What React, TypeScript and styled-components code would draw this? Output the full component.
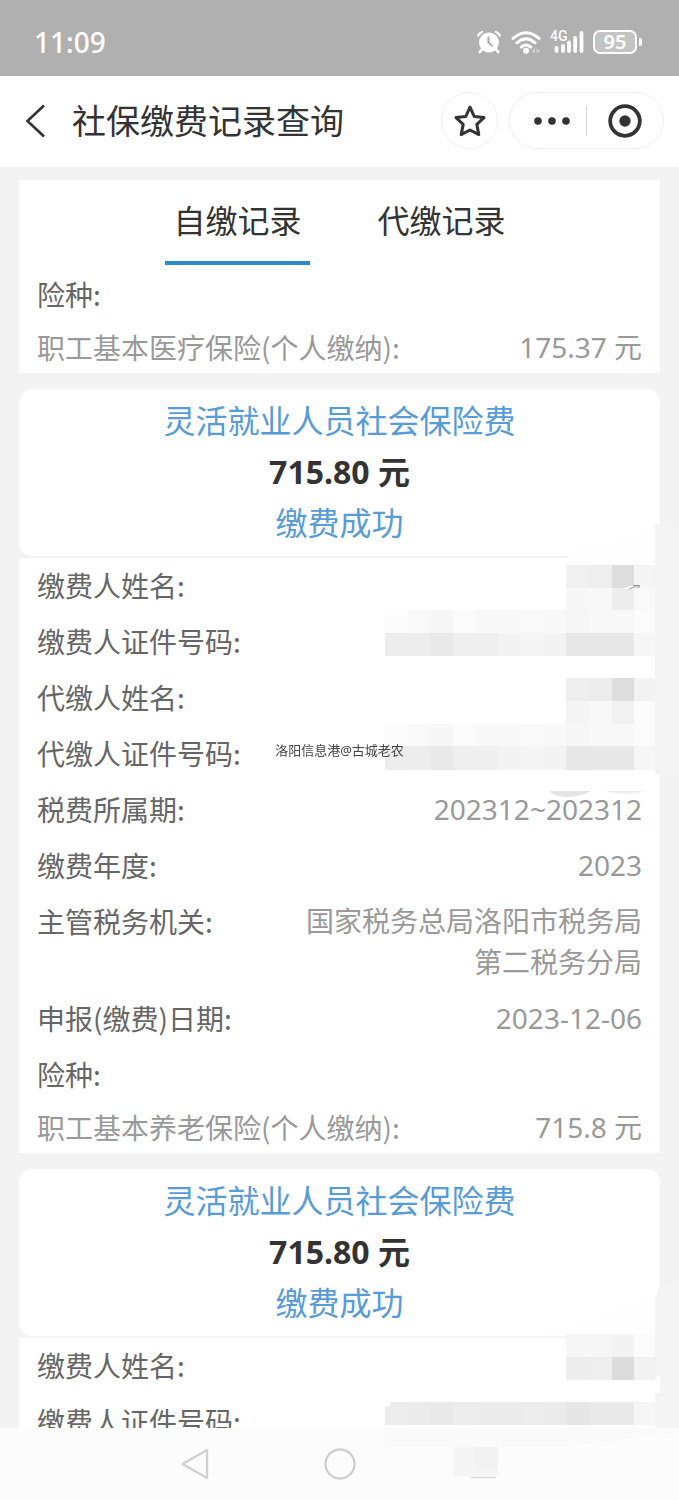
import React from "react";
import styled, { createGlobalStyle } from "styled-components";

const GlobalStyle = createGlobalStyle`
  * { box-sizing: border-box; }
  body {
    margin: 0;
    background: #f3f3f3;
    font-family: "Noto Sans", "Noto Sans CJK SC", sans-serif;
    color: #333;
  }
  button {
    border: 0;
    padding: 0;
    background: none;
    color: inherit;
    font: inherit;
    cursor: pointer;
  }
  svg { display: block; }
`;

const Screen = styled.div`
  display: flex;
  flex-direction: column;
  height: 100vh;
  overflow: hidden;
`;

const StatusBar = styled.div`
  display: flex;
  flex: none;
  align-items: center;
  justify-content: space-between;
  height: 76px;
  padding: 8px 37px 0 34px;
  background: #b0b0b0;
  color: #fff;
`;

const Clock = styled.time`
  font-size: 28px;
  font-weight: 500;
  line-height: 40px;
`;

const StatusIcons = styled.div`
  display: flex;
  align-items: center;
  gap: 9px;
`;

const Signal = styled.div`
  position: relative;
`;

const Network = styled.span`
  position: absolute;
  top: -1px;
  left: 0;
  font-family: Roboto, sans-serif;
  font-size: 14px;
  font-weight: 500;
  line-height: 14px;
`;

const Battery = styled.div`
  display: flex;
  align-items: center;
  gap: 2px;
`;

const BatteryLevel = styled.span`
  width: 44px;
  height: 24px;
  border: 2px solid #fff;
  border-radius: 7px;
  background: #c4c4c4;
  font-size: 20px;
  font-weight: 600;
  line-height: 20px;
  text-align: center;
`;

const BatteryTip = styled.span`
  width: 3px;
  height: 8px;
  border-radius: 0 2px 2px 0;
  background: #fff;
`;

const Header = styled.header`
  display: flex;
  flex: none;
  align-items: center;
  height: 91px;
  padding: 0 15px 2px 24px;
  background: #fff;
`;

const Title = styled.h1`
  flex: 1;
  margin: 0 0 0 26px;
  font-size: 34px;
  font-weight: 400;
  line-height: 48px;
`;

const RoundButton = styled.button`
  display: grid;
  place-items: center;
  width: 57px;
  height: 57px;
  margin-right: 11px;
  border: 1px solid #f0f0f0;
  border-radius: 50%;
`;

const Capsule = styled.div`
  display: flex;
  align-items: center;
  height: 57px;
  border: 1px solid #f0f0f0;
  border-radius: 29px;
`;

const CapsuleButton = styled.button<{ $indent?: number }>`
  display: grid;
  place-items: center;
  width: 76px;
  height: 55px;
  padding-left: ${(p) => p.$indent ?? 0}px;
`;

const CapsuleDivider = styled.span`
  width: 1px;
  height: 30px;
  background: #d8d8d8;
`;

const Content = styled.main`
  flex: 1;
  min-height: 0;
  padding: 13px 19px 0;
  overflow: hidden;
`;

const Panel = styled.section`
  position: relative;
  margin-bottom: 16px;
`;

const Tabs = styled.div`
  display: flex;
  justify-content: center;
  gap: 60px;
  padding-bottom: 2px;
  background: #fff;
`;

const Tab = styled.button<{ $active?: boolean }>`
  height: 85px;
  padding: 0 8px;
  border-bottom: 4px solid ${(p) => (p.$active ? "#2e8bcb" : "transparent")};
  font-size: 32px;
  line-height: 80px;
`;

const Summary = styled.div`
  margin-bottom: 2px;
  padding: 6px 0 8px;
  border-radius: 14px;
  background: #fff;
  text-align: center;
  font-size: 32px;
  line-height: 51px;
`;

const SummaryLink = styled.a`
  display: block;
  color: #579bd7;
  text-decoration: none;
`;

const Amount = styled.strong`
  display: block;
  font-weight: 700;
`;

const SummaryStatus = styled.span`
  display: block;
  color: #579bd7;
`;

const Details = styled.dl`
  display: flex;
  flex-direction: column;
  gap: 15px;
  margin: 0;
  padding: 7px 18px 5px;
  background: #fff;
  font-size: 28px;
  line-height: 41px;
`;

const Row = styled.div<{ $muted?: boolean }>`
  display: flex;
  justify-content: space-between;
  min-height: 41px;
  margin-top: ${(p) => (p.$muted ? -3 : 0)}px;
  color: ${(p) => (p.$muted ? "#999" : "#666")};
`;

const Label = styled.dt`
  flex: none;
  font-family: "Noto Sans CJK SC", sans-serif;
`;

const Value = styled.dd`
  max-width: 344px;
  margin: 0;
  color: #999;
  text-align: right;
`;

const Redaction = styled.div<{ $top: number }>`
  position: absolute;
  top: ${(p) => p.$top}px;
  right: -19px;
`;

const Watermark = styled.span`
  position: fixed;
  top: 50%;
  left: 50%;
  transform: translate(-50%, -50%);
  color: #444;
  font-size: 13px;
  line-height: 20px;
  white-space: nowrap;
`;

const NavBar = styled.nav`
  position: relative;
  display: flex;
  flex: none;
  align-items: center;
  justify-content: center;
  gap: 113px;
  height: 72px;
  background: #fcfcfc;
`;

const NavButton = styled.button`
  display: grid;
  place-items: center;
  width: 32px;
  height: 40px;
`;

const NavRedaction = styled.div`
  position: absolute;
  top: 0;
  right: 0;
  pointer-events: none;
`;

const CELL = 68 / 3;

/* Each row lists grey levels for the cells, starting at the given column. */
type MosaicRow = { row: number; col: number; shades: string[] };

const Mosaic = ({ rows, top }: { rows: MosaicRow[]; top: number }) => (
  <g shapeRendering="crispEdges">
    {rows.flatMap(({ row, col, shades }) =>
      shades.map((shade, i) => (
        <rect
          key={`${row}-${i}`}
          x={(col + i) * CELL}
          y={top + row * CELL}
          width={col + i === 11 ? 21 : CELL + 0.5}
          height={CELL + 0.5}
          fill={`#${shade.repeat(3)}`}
        />
      ))
    )}
  </g>
);

const light = ["fc", "f9", "f7", "fb", "f8", "f8", "f9", "f8", "f6", "f8", "f8", "fb"];
const dark = ["ec", "ed", "e9", "ef", "ef", "f3", "f5", "f3", "e7", "e8", "e8", "f6"];

const firstMosaic: MosaicRow[] = [
  { row: 0, col: 8, shades: ["f0", "ee", "dd", "f5"] },
  { row: 1, col: 8, shades: ["f7", "f8", "ed", "f9"] },
  { row: 2, col: 0, shades: light },
  { row: 3, col: 0, shades: dark },
  { row: 5, col: 8, shades: ["ef", "ed", "dd", "f3"] },
  { row: 6, col: 8, shades: ["f5", "f8", "f2", "fb"] },
  { row: 7, col: 0, shades: light },
  { row: 8, col: 0, shades: dark },
];

const secondMosaic: MosaicRow[] = [
  { row: 0, col: 8, shades: ["f6", "f6", "f3", "fb"] },
  { row: 1, col: 8, shades: ["ed", "ee", "dc", "f2"] },
  { row: 3, col: 0, shades: ["ed", "eb", "e9", "ed", "eb", "eb", "ec", "eb", "e6", "e9", "e9", "f6"] },
];

const FullRedaction = () => (
  <Redaction $top={135} aria-hidden="true">
    <svg width="294" height="278">
      <path d="M178 37L204 20L245 8L270 0V41H181Z" fill="#fefefe" />
      <path d="M270 0H290V251H270Z" fill="#f4f4f4" />
      <Mosaic rows={firstMosaic} top={41} />
      <path d="M238 65q9-5 20-4q-4 4-20 4Z" fill="#fff" />
      <path d="M244 65l5-2h6M248 61.500h7" fill="none" stroke="#999" />
      <path d="M164 267H206Q195 273 180 273Q168 272 164 267Z" fill="#e5e5e5" />
      <path d="M220 267H261Q240 273 220 267Z" fill="#efefef" />
    </svg>
  </Redaction>
);

const PartialRedaction = () => (
  <Redaction $top={116} aria-hidden="true">
    <svg width="294" height="143">
      <path d="M155 48L220 25L271 5V49H155V54Z" fill="#fefefe" />
      <path d="M270 14L274 3L294 0V143H270Z" fill="#f4f4f4" />
      <Mosaic rows={secondMosaic} top={49} />
      <path d="M270 94L275 89V108H270Z" fill="#fff" />
      <path d="M0 117H5V121L0 122Z" fill="#fff" />
    </svg>
  </Redaction>
);

const AlarmIcon = () => (
  <svg width="26" height="24" viewBox="0 0 26 24" fill="none" stroke="#fff" strokeLinecap="round">
    <circle cx="13" cy="12.5" r="10" fill="#fff" stroke="none" />
    <path d="M2.2 5.5Q3.3 3.2 6 2M23.8 5.5Q22.7 3.2 20 2" strokeWidth="2.4" />
    <path d="M6 19.5L3.7 22M20 19.5L22.3 22" strokeWidth="2.6" />
    <path d="M12.5 7.500V12.500L16 15.500" stroke="#b0b0b0" strokeWidth="2.2" />
  </svg>
);

const WifiIcon = () => (
  <svg width="30" height="24" viewBox="0 0 30 24" fill="none" stroke="#fff" strokeWidth="3" strokeLinecap="round">
    <path d="M2 8.4Q15-3 28 8.4M6 12.8Q15 5 24 12.8M10.3 17Q15 13 19.7 17" />
    <circle cx="15" cy="20.7" r="3" fill="#fff" stroke="none" />
    <path d="M24 18.5v5L20.5 21ZM25.5 18.5v5L29.5 21Z" fill="#d0d0d0" stroke="none" />
  </svg>
);

const SignalIcon = () => (
  <svg width="34" height="24" viewBox="0 0 34 24" stroke="#fff" strokeWidth="3.8" strokeLinecap="round">
    <path d="M6.5 18v3M13 16v5M19 12.5V21M25.2 8V21M31.5 3V21" />
  </svg>
);

const payerRows = ["缴费人姓名:", "缴费人证件号码:"];
const agentRows = ["代缴人姓名:", "代缴人证件号码:"];

const infoRows: [string, string][] = [
  ["税费所属期:", "202312~202312"],
  ["缴费年度:", "2023"],
  ["主管税务机关:", "国家税务总局洛阳市税务局第二税务分局"],
  ["申报(缴费)日期:", "2023-12-06"],
  ["险种:", ""],
];

const DetailRow = ({ label, value = "", muted }: { label: string; value?: string; muted?: boolean }) => (
  <Row $muted={muted}>
    <Label>{label}</Label>
    <Value>{value}</Value>
  </Row>
);

const PaymentSummary = () => (
  <Summary>
    <SummaryLink href="#payment">灵活就业人员社会保险费</SummaryLink>
    <Amount>715.80 元</Amount>
    <SummaryStatus>缴费成功</SummaryStatus>
  </Summary>
);

export default function App() {
  return (
    <Screen>
      <GlobalStyle />
      <StatusBar>
        <Clock>11:09</Clock>
        <StatusIcons>
          <AlarmIcon />
          <WifiIcon />
          <Signal>
            <SignalIcon />
            <Network>4G</Network>
          </Signal>
          <Battery>
            <BatteryLevel>95</BatteryLevel>
            <BatteryTip />
          </Battery>
        </StatusIcons>
      </StatusBar>

      <Header>
        <button type="button" aria-label="返回">
          <svg width="22" height="34" viewBox="0 0 22 34" fill="none" stroke="#333" strokeWidth="2.6">
            <path d="M20 1.5L3.5 17L20 32.5" />
          </svg>
        </button>
        <Title>社保缴费记录查询</Title>
        <RoundButton type="button" aria-label="收藏">
          <svg width="34" height="34" viewBox="0 0 34 34" fill="none" stroke="#333" strokeWidth="3" strokeLinejoin="round">
            <path d="M17 3.2L21.2 12.5L31 13.6L23.8 20.4L25.8 30.6L17 26L8.2 30.6L10.2 20.4L3 13.6L12.8 12.5Z" />
          </svg>
        </RoundButton>
        <Capsule>
          <CapsuleButton type="button" aria-label="更多" $indent={8}>
            <svg width="36" height="8" viewBox="0 0 36 8" fill="#333">
              <circle cx="4" cy="4" r="3.8" />
              <circle cx="18" cy="4" r="3.8" />
              <circle cx="32" cy="4" r="3.8" />
            </svg>
          </CapsuleButton>
          <CapsuleDivider />
          <CapsuleButton type="button" aria-label="关闭">
            <svg width="34" height="34" viewBox="0 0 34 34">
              <circle cx="17" cy="17" r="14.8" fill="none" stroke="#333" strokeWidth="3.8" />
              <circle cx="17" cy="17" r="5.7" fill="#333" />
            </svg>
          </CapsuleButton>
        </Capsule>
      </Header>

      <Content>
        <Panel>
          <Tabs role="tablist">
            <Tab type="button" role="tab" aria-selected="true" $active>自缴记录</Tab>
            <Tab type="button" role="tab" aria-selected="false">代缴记录</Tab>
          </Tabs>
          <Details>
            <DetailRow label="险种:" />
            <DetailRow label="职工基本医疗保险(个人缴纳):" value="175.37 元" muted />
          </Details>
        </Panel>

        <Panel>
          <PaymentSummary />
          <Details>
            {[...payerRows, ...agentRows].map((label) => (
              <DetailRow key={label} label={label} />
            ))}
            {infoRows.map(([label, value]) => (
              <DetailRow key={label} label={label} value={value} />
            ))}
            <DetailRow label="职工基本养老保险(个人缴纳):" value="715.8 元" muted />
          </Details>
          <FullRedaction />
        </Panel>

        <Panel>
          <PaymentSummary />
          <Details>
            {payerRows.map((label) => (
              <DetailRow key={label} label={label} />
            ))}
          </Details>
          <PartialRedaction />
        </Panel>
      </Content>

      <NavBar>
        <NavButton type="button" aria-label="后退">
          <svg width="30" height="32" viewBox="0 0 30 32" fill="none" stroke="#d0d0d0" strokeWidth="2.4" strokeLinejoin="round">
            <path d="M27 2V30L2.5 16Z" />
          </svg>
        </NavButton>
        <NavButton type="button" aria-label="主页">
          <svg width="32" height="32" viewBox="0 0 32 32" fill="none" stroke="#d0d0d0" strokeWidth="2.4">
            <circle cx="16" cy="16" r="14.5" />
          </svg>
        </NavButton>
        <NavButton type="button" aria-label="最近任务" />
        <NavRedaction aria-hidden="true">
          <svg width="294" height="60">
            <path d="M0 0H294V4L225 13L181 19H0Z" fill="#fafafa" />
            <path d="M68 19H113V48H68Z" fill="#f5f5f5" />
            <path d="M90 19H113V42H90Z" fill="#f2f2f2" />
            <path d="M86 49.5H111" stroke="#d8d8d8" strokeWidth="1.5" />
          </svg>
        </NavRedaction>
      </NavBar>
      <Watermark>洛阳信息港@古城老农</Watermark>
    </Screen>
  );
}
